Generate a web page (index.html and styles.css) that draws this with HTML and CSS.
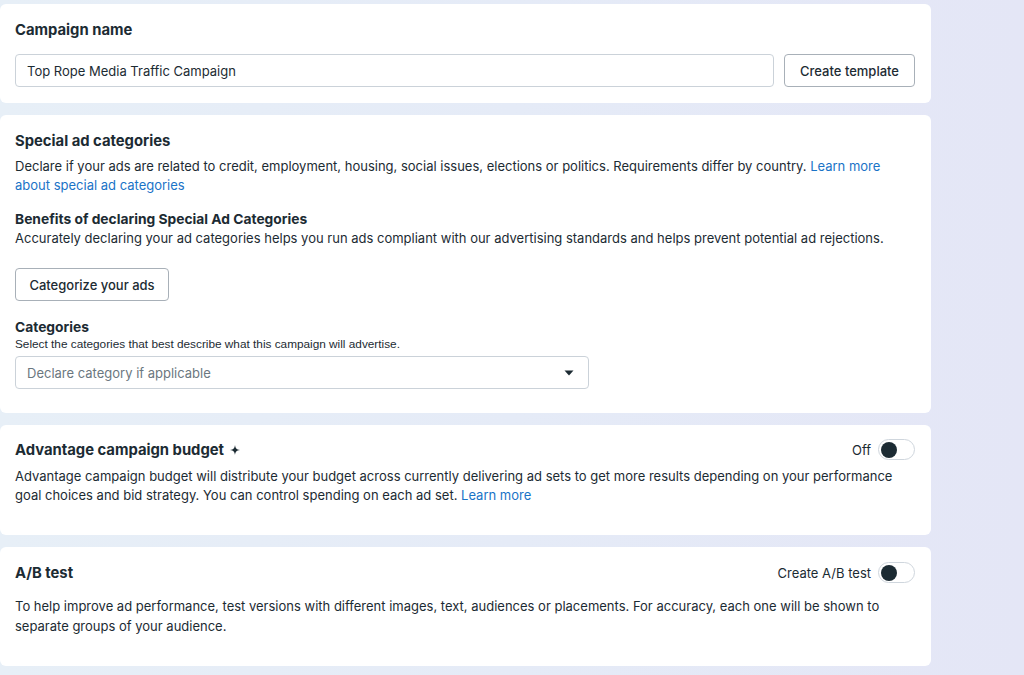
FILE: index.html
```html
<!DOCTYPE html>
<html lang="en">
<head>
<meta charset="utf-8">
<title>Campaign settings</title>
<link rel="stylesheet" href="styles.css">
</head>
<body>
<main class="page">
  <section class="card card-name">
    <h2 class="title">Campaign name</h2>
    <div class="name-row">
      <div class="input">Top Rope Media Traffic Campaign</div>
      <button class="btn">Create template</button>
    </div>
  </section>

  <section class="card card-special">
    <h2 class="title">Special ad categories</h2>
    <p class="text lead">Declare if your ads are related to credit, employment, housing, social issues, elections or politics. Requirements differ by country. <a class="link">Learn more</a> <a class="link">about special ad categories</a></p>
    <h3 class="subtitle">Benefits of declaring Special Ad Categories</h3>
    <p class="text">Accurately declaring your ad categories helps you run ads compliant with our advertising standards and helps prevent potential ad rejections.</p>
    <button class="btn btn-categorize">Categorize your ads</button>
    <h3 class="subtitle cat-title">Categories</h3>
    <p class="small">Select the categories that best describe what this campaign will advertise.</p>
    <div class="select">
      <span class="placeholder">Declare category if applicable</span>
      <svg class="caret" width="10" height="6" viewBox="0 0 10 6"><path d="M0.5 0.5h9L5 5.5z" fill="#1c2b33"/></svg>
    </div>
  </section>

  <section class="card card-budget">
    <div class="head-row">
      <h2 class="title">Advantage campaign budget <svg class="sparkle" width="10" height="10" viewBox="0 0 10 10"><path d="M5 0 C5.4 3.2 6.3 4.4 10 5 C6.3 5.6 5.4 6.8 5 10 C4.6 6.8 3.7 5.6 0 5 C3.7 4.4 4.6 3.2 5 0Z" fill="#1c2b33"/></svg></h2>
      <div class="toggle-wrap"><span class="toggle-label">Off</span><span class="toggle"><span class="knob"></span></span></div>
    </div>
    <p class="text budget-text">Advantage campaign budget will distribute your budget across currently delivering ad sets to get more results depending on your performance goal choices and bid strategy. You can control spending on each ad set. <a class="link">Learn more</a></p>
  </section>

  <section class="card card-ab">
    <div class="head-row">
      <h2 class="title">A/B test</h2>
      <div class="toggle-wrap"><span class="toggle-label">Create A/B test</span><span class="toggle"><span class="knob"></span></span></div>
    </div>
    <p class="text ab-text">To help improve ad performance, test versions with different images, text, audiences or placements. For accuracy, each one will be shown to separate groups of your audience.</p>
  </section>
</main>
</body>
</html>
```

FILE: styles.css
```css
* { box-sizing: border-box; }
html, body { height: 100%; }
body {
  margin: 0;
  background: linear-gradient(90deg, #e7eff7 0%, #e5ebf7 50%, #e4e6f6 100%);
  font-family: Inter, "Liberation Sans", Arial, sans-serif;
  color: #1c2b33;
  overflow: hidden;
}
.page {
  width: 931px;
  padding-top: 4px;
  display: flex;
  flex-direction: column;
  gap: 12px;
}
.card {
  background: #fff;
  border-radius: 6px;
  padding: 16px 16px 16px 15px;
}
.title {
  margin: 0;
  font-size: 14.8px;
  font-weight: 700;
  line-height: 20px;
  color: #1c2b33;
  display: flex;
  align-items: center;
  gap: 6px;
}
.subtitle {
  margin: 0;
  font-size: 13.8px;
  font-weight: 700;
  line-height: 19px;
}
.text {
  margin: 0;
  font-size: 13px;
  line-height: 19px;
  color: #1c2b33;
}
.small {
  margin: 0;
  font-family: "Liberation Sans", Arial, sans-serif;
  font-size: 11.8px;
  line-height: 15px;
}
.link { color: #1a73c7; cursor: pointer; }

.name-row {
  display: flex;
  gap: 10px;
  margin-top: 14px;
}
.input {
  flex: 1;
  height: 33px;
  border: 1px solid #cbd2d9;
  border-radius: 4px;
  padding: 0 11px;
  display: flex;
  align-items: center;
  font-size: 13px;
}
.btn {
  height: 33px;
  padding: 0 15px;
  border: 1px solid #a8b0b8;
  border-radius: 4px;
  background: #fff;
  font-family: Inter, "Liberation Sans", sans-serif;
  font-size: 13px;
  font-weight: 500;
  color: #1c2b33;
}
.card-special { padding-bottom: 24px; }
.lead { margin-top: 6px; }
.card-special .subtitle:first-of-type { margin-top: 15px; }
.btn-categorize {
  display: block;
  margin-top: 20px;
  width: 154px;
  padding: 0;
}
.cat-title { margin-top: 17px; }
.select {
  margin-top: 4px;
  width: 574px;
  height: 33px;
  border: 1px solid #cbd2d9;
  border-radius: 4px;
  display: flex;
  align-items: center;
  justify-content: space-between;
  padding: 0 14px 0 11px;
  font-size: 13px;
}
.placeholder { color: #6b7780; }

.head-row {
  display: flex;
  align-items: center;
  justify-content: space-between;
}
.card-budget { padding-top: 14px; padding-bottom: 30px; }
.budget-text { margin-top: 7px; }
.card-ab { padding-top: 15px; padding-bottom: 30px; }
.ab-text { margin-top: 13px; line-height: 20px; }

.toggle-wrap {
  display: flex;
  align-items: center;
  gap: 7px;
  font-size: 13px;
}
.toggle {
  width: 37px;
  height: 21px;
  border: 1px solid #cfd6dd;
  border-radius: 11px;
  background: #fff;
  display: flex;
  align-items: center;
  padding-left: 2px;
}
.knob {
  width: 16px;
  height: 16px;
  border-radius: 50%;
  background: #1c2b33;
}
```
